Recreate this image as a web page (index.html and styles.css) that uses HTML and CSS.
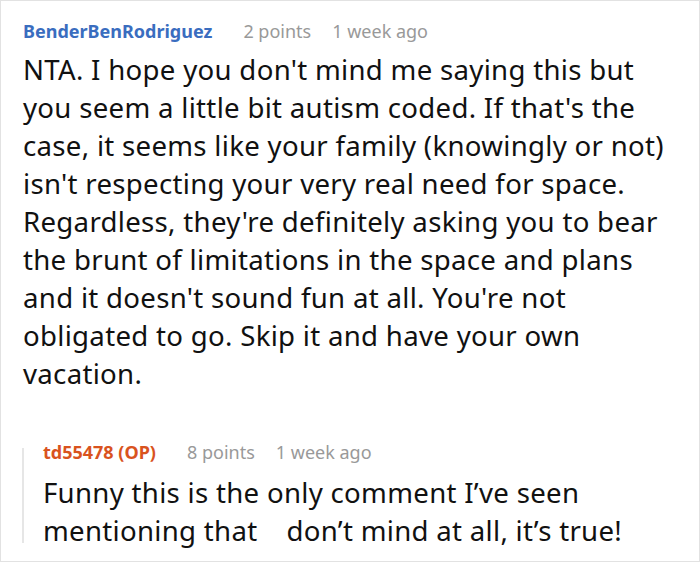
FILE: index.html
```html
<!DOCTYPE html>
<html>
<head>
<meta charset="utf-8">
<link rel="stylesheet" href="styles.css">
</head>
<body>
<div class="frame">
  <div class="comment">
    <div class="meta">
      <span class="author">BenderBenRodriguez</span>
      <span class="info">2 points</span>
      <span class="info">1 week ago</span>
    </div>
    <p class="text">NTA. I hope you don't mind me saying this but<br>you seem a little bit autism coded. If that's the<br>case, it seems like your family (knowingly or not)<br>isn't respecting your very real need for space.<br>Regardless, they're definitely asking you to bear<br>the brunt of limitations in the space and plans<br>and it doesn't sound fun at all. You're not<br>obligated to go. Skip it and have your own<br>vacation.</p>
    <div class="reply">
      <div class="meta">
        <span class="author op">td55478 (OP)</span>
        <span class="info">8 points</span>
        <span class="info">1 week ago</span>
      </div>
      <p class="text">Funny this is the only comment I’ve seen<br>mentioning that <span class="gap"></span> don’t mind at all, it’s true!</p>
    </div>
  </div>
</div>
</body>
</html>
```

FILE: styles.css
```css
html, body {
  margin: 0;
  padding: 0;
  background: #fff;
}
.frame {
  box-sizing: border-box;
  width: 700px;
  height: 562px;
  border: 1px solid #e2e2e2;
  overflow: hidden;
  font-family: "Noto Sans", sans-serif;
}
.comment {
  padding: 18px 10px 0 22px;
}
.meta {
  display: flex;
  gap: 21px;
  font-size: 18px;
  line-height: 24px;
}
.author {
  font-weight: bold;
  color: #3a6dbf;
}
.author.op {
  color: #d9531e;
}
.info {
  color: #999;
}
.meta .author {
  margin-right: 10px;
}
.text {
  margin: 7px 0 0;
  font-size: 27.6px;
  line-height: 38px;
  letter-spacing: 0.3px;
  color: #111;
  white-space: nowrap;
}
.reply {
  position: relative;
  margin-top: 48px;
  padding-left: 20px;
}
.reply::before {
  content: "";
  position: absolute;
  left: -1px;
  top: 8px;
  bottom: 6px;
  width: 2px;
  background: #e6e6e6;
}
.reply .text {
  margin-top: 9px;
}
.gap {
  display: inline-block;
  width: 14px;
}
```
